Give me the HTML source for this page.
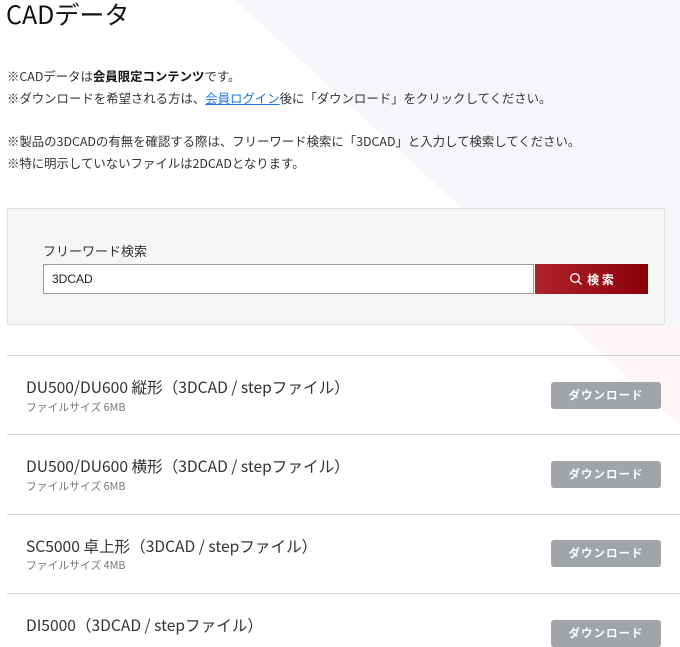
<!DOCTYPE html>
<html><head><meta charset="utf-8"><style>
body{margin:0;width:680px;height:640px;overflow:hidden;background:#fff;font-family:"Liberation Sans","Noto Sans CJK JP",sans-serif;color:#222;position:relative}
.bg{position:absolute;left:0;top:0}
h1{position:absolute;left:6px;top:-4px;margin:0;font-weight:400;font-size:25px;color:#111;font-family:"Noto Sans CJK JP",sans-serif}
.note{position:absolute;left:7px;font-size:12.4px;color:#333;font-family:"Noto Sans CJK JP",sans-serif;white-space:nowrap}
.note b{color:#111}
.note a{color:#1a73e8;text-decoration:underline}
.sbox{position:absolute;left:7px;top:208px;width:656px;height:115px;background:#f5f5f5;border:1px solid #e0e0e0}
.slabel{position:absolute;left:35px;top:32px;font-size:13px;color:#333;font-family:"Noto Sans CJK JP",sans-serif}
.inp{position:absolute;left:35px;top:55px;height:28px;background:#fff;border:1px solid #999;font-size:12px;line-height:28px;padding-left:8px;width:481px}
.btn{position:absolute;left:527px;top:55px;width:113px;height:30px;background:linear-gradient(90deg,#b0222c,#8a0008);color:#fff;font-size:12px;font-weight:bold;display:flex;align-items:center;justify-content:center;font-family:"Noto Sans CJK JP",sans-serif}
.line{position:absolute;left:7px;width:673px;height:1px;background:#d5d5d5}
.t{position:absolute;left:26px;font-size:15.6px;color:#333;font-family:"Noto Sans CJK JP",sans-serif;white-space:nowrap}
.s{position:absolute;left:26px;font-size:10.8px;color:#777;font-family:"Noto Sans CJK JP",sans-serif}
.d{position:absolute;left:551px;width:110px;height:27px;background:#a1a4a9;border-radius:3px;color:#fff;font-size:11.5px;font-weight:bold;text-align:center;line-height:27px;font-family:"Noto Sans CJK JP",sans-serif;letter-spacing:1px}
</style></head><body>
<svg class="bg" width="680" height="640"><polygon points="235,0 680,0 680,408" fill="#f4f6fa"/><polygon points="570,325 680,325 680,425" fill="#fdf5f6"/></svg>
<h1>CADデータ</h1>
<div class="note" style="top:67px">※CADデータは<b>会員限定コンテンツ</b>です。</div>
<div class="note" style="top:89px">※ダウンロードを希望される方は、<a>会員ログイン</a>後に「ダウンロード」をクリックしてください。</div>
<div class="note" style="top:132px">※製品の3DCADの有無を確認する際は、フリーワード検索に「3DCAD」と入力して検索してください。</div>
<div class="note" style="top:154px">※特に明示していないファイルは2DCADとなります。</div>
<div class="sbox"><div class="slabel">フリーワード検索</div><div class="inp">3DCAD</div>
<div class="btn"><svg width="14" height="14" viewBox="0 0 14 14" style="margin-right:4px"><circle cx="6" cy="6" r="4.3" fill="none" stroke="#fff" stroke-width="1.3"/><line x1="9.2" y1="9.2" x2="12.5" y2="12.5" stroke="#fff" stroke-width="1.3"/></svg>検&nbsp;索</div></div>
<div class="line" style="top:355px"></div>
<div class="t" style="top:376px">DU500/DU600 縦形（3DCAD / stepファイル）</div><div class="s" style="top:399px">ファイルサイズ 6MB</div><div class="d" style="top:382px">ダウンロード</div>
<div class="line" style="top:434px"></div>
<div class="t" style="top:455px">DU500/DU600 横形（3DCAD / stepファイル）</div><div class="s" style="top:478px">ファイルサイズ 6MB</div><div class="d" style="top:461px">ダウンロード</div>
<div class="line" style="top:514px"></div>
<div class="t" style="top:535px">SC5000 卓上形（3DCAD / stepファイル）</div><div class="s" style="top:557px">ファイルサイズ 4MB</div><div class="d" style="top:540px">ダウンロード</div>
<div class="line" style="top:593px"></div>
<div class="t" style="top:614px">DI5000（3DCAD / stepファイル）</div><div class="d" style="top:620px">ダウンロード</div>
</body></html>
